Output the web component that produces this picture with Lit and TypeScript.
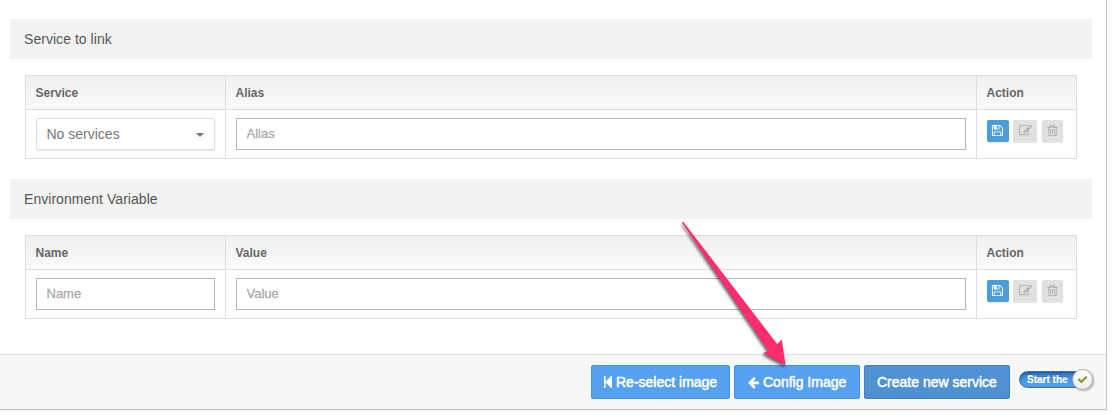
import { LitElement, html, css, svg } from "lit";
import { customElement, property } from "lit/decorators.js";

const ICONS: Record<string, string> = {
  save: "M512 1536h768v-384h-768v384zm896 0h128v-896q0-14-10-38.5t-20-34.5l-281-281q-10-10-34-20t-39-10v416q0 40-28 68t-68 28h-576q-40 0-68-28t-28-68v-416h-128v1280h128v-416q0-40 28-68t68-28h832q40 0 68 28t28 68v416zm-384-928v-320q0-13-9.5-22.5t-22.5-9.5h-192q-13 0-22.5 9.5t-9.5 22.5v320q0 13 9.5 22.5t22.5 9.5h192q13 0 22.5-9.5t9.5-22.5zm640 32v928q0 40-28 68t-68 28h-1344q-40 0-68-28t-28-68v-1344q0-40 28-68t68-28h928q40 0 88 20t76 48l280 280q28 28 48 76t20 88z",
  edit: "M888 1184l116-116-152-152-116 116v56h96v96h56zm440-720q-16-16-33 1l-350 350q-17 17-1 33t33-1l350-350q17-17 1-33zm80 594v190q0 119-84.5 203.5t-203.5 84.5h-832q-119 0-203.5-84.5t-84.5-203.5v-832q0-119 84.5-203.5t203.5-84.5h832q63 0 117 25 15 7 18 23 3 17-9 29l-49 49q-14 14-32 8-23-6-45-6h-832q-66 0-113 47t-47 113v832q0 66 47 113t113 47h832q66 0 113-47t47-113v-126q0-13 9-22l64-64q15-15 35-7t20 29zm-96-738l288 288-672 672h-288v-288zm444 132l-92 92-288-288 92-92q28-28 68-28t68 28l152 152q28 28 28 68t-28 68z",
  trash: "M704 736v576q0 14-9 23t-23 9h-64q-14 0-23-9t-9-23v-576q0-14 9-23t23-9h64q14 0 23 9t9 23zm256 0v576q0 14-9 23t-23 9h-64q-14 0-23-9t-9-23v-576q0-14 9-23t23-9h64q14 0 23 9t9 23zm256 0v576q0 14-9 23t-23 9h-64q-14 0-23-9t-9-23v-576q0-14 9-23t23-9h64q14 0 23 9t9 23zm128 724v-948h-896v948q0 22 7 40.5t14.5 27 10.5 8.5h832q3 0 10.5-8.5t14.5-27 7-40.5zm-672-1076h448l-48-117q-7-9-17-11h-317q-10 2-17 11zm928 32v64q0 14-9 23t-23 9h-96v948q0 83-47 143.5t-113 60.5h-832q-66 0-113-58.5t-47-141.5v-952h-96q-14 0-23-9t-9-23v-64q0-14 9-23t23-9h309l70-167q15-37 54-63t79-26h320q40 0 79 26t54 63l70 167h309q14 0 23 9t9 23z",
  back: "M1664 896v128q0 53-32.5 90.5t-84.5 37.5h-704l293 294q38 36 38 90t-38 90l-75 76q-37 37-90 37-52 0-91-37l-651-652q-37-37-37-90 0-52 37-91l651-650q38-38 91-38 52 0 90 38l75 74q38 38 38 91t-38 91l-293 293h704q52 0 84.5 37.5t32.5 90.5z",
  check: "M1671 566q0 40-28 68l-724 724-136 136q-28 28-68 28t-68-28l-136-136-362-362q-28-28-28-68t28-68l136-136q28-28 68-28t68 28l294 295 656-657q28-28 68-28t68 28l136 136q28 28 28 68z",
};

const icon = (name: string, size: number) =>
  html`<svg width=${size} height=${size} viewBox="0 0 1792 1792" fill="currentColor">${svg`<path d=${ICONS[name]} />`}</svg>`;

@customElement("link-table")
class LinkTable extends LitElement {
  @property() heading = "";
  @property() first = "";
  @property() second = "";
  @property({ type: Boolean }) dropdown = false;

  static styles = css`
    :host { display: block; }
    * { box-sizing: border-box; }
    svg { display: block; flex: none; }
    .bar {
      height: 40px; margin: 0 14px 16px 10px; padding: 0 14px;
      background: #f3f3f3; color: #555; font-size: 14px; line-height: 40px;
    }
    .heading { letter-spacing: 0.04px; }
    .grid {
      display: grid; grid-template-columns: 200px 751px 100px; grid-template-rows: 34px 49px;
      width: 1052px; margin-left: 25px;
      border-top: 1px solid #ddd; border-left: 1px solid #ddd;
    }
    .th, .td { border-right: 1px solid #ddd; border-bottom: 1px solid #ddd; }
    .th {
      padding-left: 9.5px; font-size: 12px; font-weight: bold; color: #666; line-height: 34px;
      background: linear-gradient(#f0f0f0, #fafafa);
    }
    .td { padding: 8px 10px 0; background: #fff; }
    .input {
      width: 100%; height: 32px; margin: 0; border: 1px solid #b5b5b5; border-radius: 0; padding: 0 9.5px 2px;
      background: #fff; font: 13px "Liberation Sans", Arial, sans-serif; display: block;
    }
    .input::placeholder { color: #aaa; opacity: 1; -webkit-text-stroke: 0.3px #aaa; }
    .select {
      display: flex; align-items: center; justify-content: space-between;
      height: 32px; border: 1px solid #ddd; border-radius: 2px; padding: 0 10px 0 9.5px;
      box-shadow: 0 1px 1px rgba(0, 0, 0, 0.1); color: #777; font-size: 14px;
    }
    .caret { border: 4px solid transparent; border-top-color: #777; border-bottom: 0; margin-top: 2px; }
    .actions { display: flex; padding: 10px 10px 0; }
    .btn {
      display: flex; align-items: center; justify-content: center; height: 22px; border-radius: 2px;
      background: #e0e0e0; color: #aaa; box-shadow: 0 1px 1px rgba(0, 0, 0, 0.1); padding-bottom: 1px;
    }
    .save { width: 22px; background: #4b9cdb; color: #fff; margin-right: 4px; padding-right: 1px; }
    .edit { width: 24px; margin-right: 5px; }
    .trash { width: 21px; }
  `;

  render() {
    return html`
      <div class="bar"><span class="heading">${this.heading}</span></div>
      <div class="grid">
        <div class="th">${this.first}</div>
        <div class="th">${this.second}</div>
        <div class="th">Action</div>
        <div class="td">
          ${this.dropdown
            ? html`<div class="select"><span>No services</span><i class="caret"></i></div>`
            : html`<input class="input" placeholder=${this.first} />`}
        </div>
        <div class="td"><input class="input" placeholder=${this.second} /></div>
        <div class="td actions">
          <span class="btn save">${icon("save", 13)}</span>
          <span class="btn edit">${icon("edit", 13)}</span>
          <span class="btn trash">${icon("trash", 13)}</span>
        </div>
      </div>
    `;
  }
}

@customElement("app-root")
class AppRoot extends LitElement {
  static styles = css`
    :host {
      display: block; position: relative; height: 415px; overflow: hidden; background: #fff;
      font-family: "Liberation Sans", Arial, sans-serif;
    }
    * { box-sizing: border-box; }
    svg { display: block; flex: none; }
    .panel {
      display: flex; flex-direction: column; width: 1107px; height: 410px;
      border-right: 1px solid #c2c2c2; border-bottom: 1px solid #c2c2c2;
      padding-top: 19px; box-shadow: 0 1px 1px rgba(0, 0, 0, 0.04);
    }
    .body { display: flex; flex-direction: column; gap: 20px; flex: 1; }
    .footer {
      display: flex; align-items: flex-start; gap: 4px; height: 55px; padding: 10px 13px 0 591px;
      border-top: 1px solid #ddd; background: #f7f7f7;
    }
    .button {
      display: flex; align-items: center; height: 34px; border: 1px solid #4295e5; border-radius: 2px;
      background: #55a1f0; color: #fff; font-size: 14px; white-space: nowrap; -webkit-text-stroke: 0.5px #fff;
      flex: none; padding-left: 12px; gap: 4px;
    }
    .reselect { width: 139px; }
    .config { width: 126px; gap: 3px; }
    .create { width: 146px; background: #4f91d3; border-color: #3f82c4; }
    .toggle {
      position: relative; flex: none; width: 72px; height: 17px; margin: 6px 0 0 5px; border-radius: 9px;
      background: linear-gradient(#3076bb, #4b9cee 65%, #529fee); border: 1px solid #3573ad;
      box-shadow: inset 0 1px 2px rgba(0, 0, 0, 0.3);
      color: #fff; font-size: 10px; font-weight: bold; line-height: 15px; padding-left: 7px; white-space: nowrap;
      text-shadow: 0 -1px 0 rgba(0, 0, 0, 0.25); -webkit-text-stroke: 0.2px #fff;
    }
    .knob {
      position: absolute; right: -3px; top: -3px; width: 21px; height: 21px; border-radius: 50%;
      display: flex; align-items: center; justify-content: center; color: #83a03a;
      background: linear-gradient(#fff, #eee); border: 1px solid #aaa; box-shadow: 1px 1px 2px rgba(0, 0, 0, 0.35);
    }
    .arrow { position: absolute; left: 670px; top: 210px; filter: drop-shadow(-1px 2px 1.5px rgba(0, 0, 0, 0.6)); }
  `;

  render() {
    return html`
      <div class="panel">
        <div class="body">
          <link-table heading="Service to link" first="Service" second="Alias" dropdown></link-table>
          <link-table heading="Environment Variable" first="Name" second="Value"></link-table>
        </div>
        <div class="footer">
          <div class="button reselect">
            <svg width="8" height="12" viewBox="0 0 8 12" fill="#fff"><path d="M0 0h1.6v5.4L7.2 0Q8 -.3 8 .6v10.8Q8 12.3 7.2 12L1.6 6.6V12H0z" /></svg>
            <span>Re-select image</span>
          </div>
          <div class="button config">${icon("back", 13)}<span>Config Image</span></div>
          <div class="button create"><span>Create new service</span></div>
          <div class="toggle">Start the<span class="knob">${icon("check", 11)}</span></div>
        </div>
      </div>
      <svg class="arrow" width="130" height="165" viewBox="670 210 130 165">
        <path fill="#ff2d6e" d="M682 222.5L683.3 221.8L777.3 344.3L781.7 339.5L785.6 365.5L763 353L768.3 351Z" />
      </svg>
    `;
  }
}
